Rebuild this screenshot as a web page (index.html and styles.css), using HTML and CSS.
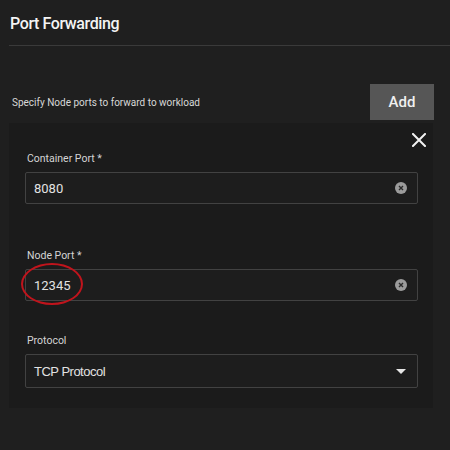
FILE: index.html
```html
<!DOCTYPE html>
<html>
<head>
<meta charset="utf-8">
<link rel="stylesheet" href="styles.css">
</head>
<body>
<div class="header"><h1 class="title">Port Forwarding</h1></div>
<div class="toolbar">
  <span class="desc">Specify Node ports to forward to workload</span>
  <button class="add-btn">Add</button>
</div>
<div class="card">
  <div class="close-row">
    <svg class="close" width="14" height="14" viewBox="0 0 14 14"><path d="M1 1L13 13M13 1L1 13" stroke="#f2f2f2" stroke-width="2" stroke-linecap="square"/></svg>
  </div>
  <div class="field">
    <div class="label">Container Port *</div>
    <div class="input">
      <span class="value">8080</span>
      <svg class="clear" width="12" height="12" viewBox="0 0 12 12"><circle cx="6" cy="6" r="6" fill="#9b9b9b"/><path d="M4 4L8 8M8 4L4 8" stroke="#2a2a2a" stroke-width="1.4"/></svg>
    </div>
  </div>
  <div class="field field-node">
    <div class="label">Node Port *</div>
    <div class="input marked">
      <span class="value">12345</span>
      <svg class="clear" width="12" height="12" viewBox="0 0 12 12"><circle cx="6" cy="6" r="6" fill="#9b9b9b"/><path d="M4 4L8 8M8 4L4 8" stroke="#2a2a2a" stroke-width="1.4"/></svg>
      <span class="ring"></span>
    </div>
  </div>
  <div class="field field-proto">
    <div class="label">Protocol</div>
    <div class="input select">
      <span class="value sel-value">TCP Protocol</span>
      <svg class="caret" width="10" height="5" viewBox="0 0 10 5"><path d="M0 0H10L5 5Z" fill="#e6e6e6"/></svg>
    </div>
  </div>
</div>
</body>
</html>
```
FILE: styles.css
```css
html, body {
  margin: 0;
  padding: 0;
  background: #1f1f1f;
  width: 450px;
  height: 450px;
  overflow: hidden;
  font-family: Roboto, "Noto Sans", sans-serif;
  color: #e6e6e6;
}
.header {
  margin-left: 9px;
  padding: 12px 0 9px 1px;
  border-bottom: 1px solid #3a3a3a;
}
.title {
  margin: 0;
  font-size: 16px;
  font-weight: 500;
  letter-spacing: -0.4px;
  line-height: 24px;
  color: #f4f4f4;
}
.toolbar {
  margin-top: 38px;
  height: 36px;
  display: flex;
  align-items: center;
  justify-content: space-between;
  padding-left: 12px;
  padding-right: 16px;
}
.desc {
  font-size: 10px;
  color: #d8d8d8;
}
.add-btn {
  width: 64px;
  height: 36px;
  border: none;
  background: #565656;
  color: #f0f0f0;
  font-family: Roboto, "Noto Sans", sans-serif;
  font-size: 15px;
  font-weight: 500;
  padding: 0;
}
.card {
  margin: 3px 0 0 9px;
  width: 424px;
  box-sizing: border-box;
  background: #1b1b1b;
  padding: 10px 15px 20px 16px;
}
.close-row {
  display: flex;
  justify-content: flex-end;
  height: 19px;
  margin-right: -8px;
}
.close {
  display: block;
}
.label {
  font-size: 10.5px;
  line-height: 14px;
  color: #d4d4d4;
  margin-bottom: 6px;
  padding-left: 2px;
}
.input {
  position: relative;
  height: 32px;
  box-sizing: border-box;
  border: 1px solid #424242;
  border-radius: 2px;
  background: #1d1d1d;
  display: flex;
  align-items: center;
  justify-content: space-between;
  padding: 0 10px 0 8px;
}
.value {
  font-size: 13px;
  color: #e2e2e2;
}
.clear {
  display: block;
}
.field-node {
  margin-top: 45px;
}
.field-proto {
  margin-top: 33px;
}
.select {
  height: 34px;
}
.sel-value {
  font-family: "Liberation Sans", Arial, sans-serif;
  font-size: 13px;
  letter-spacing: -0.5px;
}
.caret {
  display: block;
  margin-right: 1px;
}
.ring {
  position: absolute;
  left: -5px;
  top: -7px;
  width: 58px;
  height: 38px;
  border: 2px solid #c0141c;
  border-radius: 50%;
}
```
